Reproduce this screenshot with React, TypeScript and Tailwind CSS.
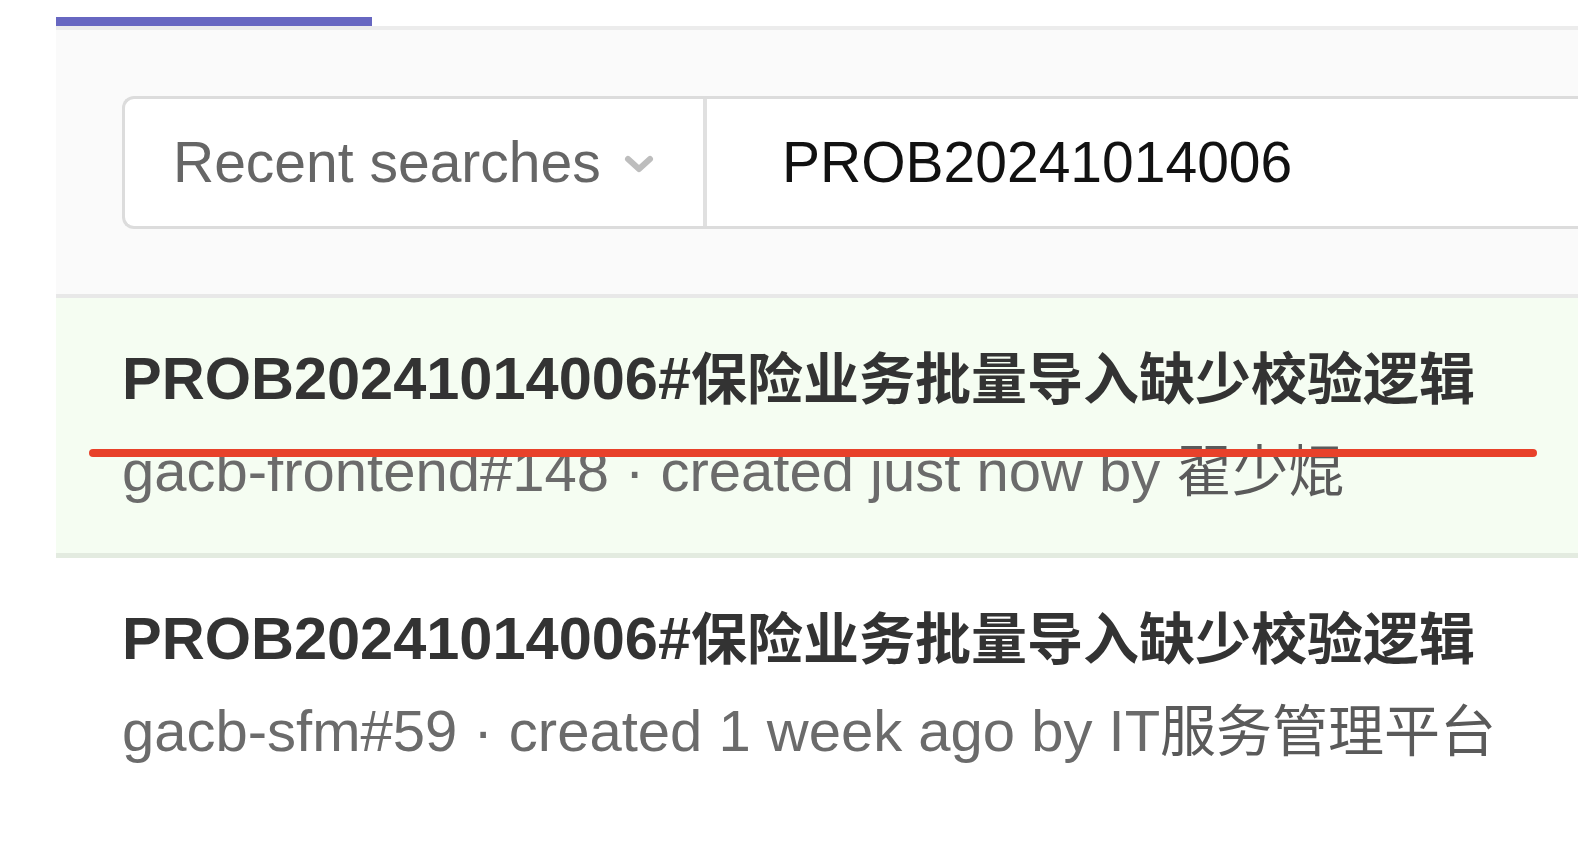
const results = [
    {
        code: 'PROB20241014006#',
        title: '保险业务批量导入缺少校验逻辑',
        meta: 'gacb-frontend#148 · created just now by ',
        author: '翟少焜',
        active: true,
    },
    {
        code: 'PROB20241014006#',
        title: '保险业务批量导入缺少校验逻辑',
        meta: 'gacb-sfm#59 · created 1 week ago by IT',
        author: '服务管理平台',
        active: false,
    },
];

function ChevronDown() {
    return (
        <svg width="32" height="22" viewBox="0 0 32 22" fill="none" className="ml-[22px] mt-[2px]">
            <path d="M5 6 L16 16 L27 6" stroke="#bdbdbd" strokeWidth="6" strokeLinecap="round" strokeLinejoin="round" />
        </svg>
    );
}

export default function App() {
    return (
        <div className="relative min-h-screen bg-white font-['Liberation_Sans','Noto_Sans_CJK_SC',sans-serif]">
            <div className="pl-[56px]">
                {/* Tab indicator */}
                <div className="pt-[17px]">
                    <div className="h-[9px] w-[316px] bg-[#6767c1]" />
                </div>

                {/* Search bar panel */}
                <div className="bg-[#fafafa] border-t-[4px] border-t-[#ececec] border-b-[4px] border-b-[#e8e8e8] pt-[66px] pb-[65px] pl-[66px]">
                    <div className="flex h-[133px] bg-white border-[3px] border-r-0 border-[#dcdcdc] rounded-l-[12px]">
                        <div className="flex items-center w-[582px] pl-[48px] border-r-[4px] border-[#e0e0e0]">
                            <span className="text-[57px] leading-none text-[#666666]">Recent searches</span>
                            <ChevronDown />
                        </div>
                        <div className="flex items-center pl-[75px]">
                            <span className="text-[57px] leading-none text-[#111111]">PROB20241014006</span>
                        </div>
                    </div>
                </div>

                {/* Results */}
                {results.map((item, idx) => (
                    <div
                        key={idx}
                        className={
                            item.active
                                ? 'bg-[#f5fdf2] border-b-[5px] border-[#e3ebe0] pt-[35px] pb-[36px] pl-[66px]'
                                : 'bg-white pt-[35px] pb-[36px] pl-[66px]'
                        }
                    >
                        <div className="h-[92px] leading-[92px] whitespace-nowrap font-bold text-[#333333]">
                            <span className="text-[59.5px]">{item.code}</span>
                            <span className="text-[56px]">{item.title}</span>
                        </div>
                        <div className="h-[92px] leading-[92px] whitespace-nowrap text-[#6b6b6b]">
                            <span className="text-[58px]">{item.meta}</span>
                            <span className="text-[56px] text-[#5a5a5a]">{item.author}</span>
                        </div>
                    </div>
                ))}
            </div>

            {/* Annotation line */}
            <div className="absolute left-[89px] top-[449px] w-[1448px] h-[8px] rounded-full bg-[#e8412a]" />
        </div>
    );
}
